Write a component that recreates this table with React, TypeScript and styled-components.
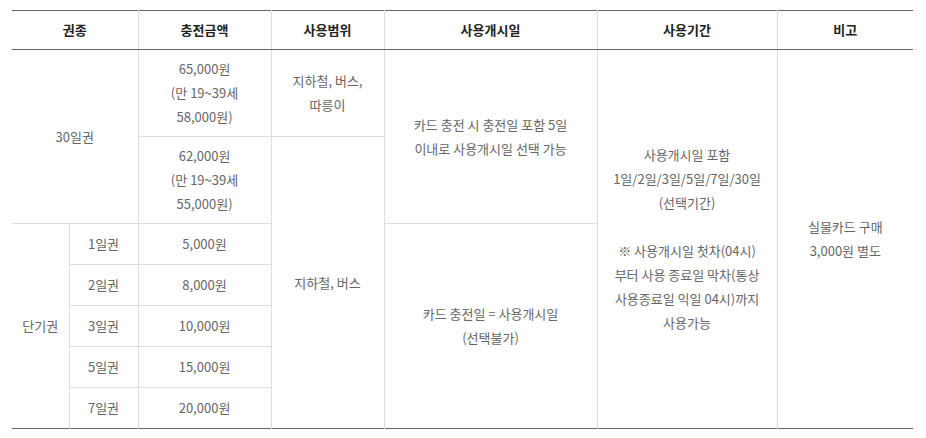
import styled, { createGlobalStyle } from 'styled-components'

const GlobalStyle = createGlobalStyle`
  body {
    margin: 0;
    background: #fff;
    font-family: 'Noto Sans CJK KR', 'Noto Sans', sans-serif;
  }
`

const Wrapper = styled.div`
  padding: 10px 13px 0 12px;
`

const Table = styled.table`
  width: 901px;
  table-layout: fixed;
  border-collapse: collapse;
  border-top: 1px solid #666;
  border-bottom: 1px solid #666;
  font-size: 13px;
  line-height: 24px;
  color: #666;
  text-align: center;
`

const HeadCell = styled.th`
  padding: 7px 6px;
  font-weight: 700;
  color: #222;
  border-left: 1px solid #ddd;
  border-bottom: 1px solid #666;

  &:first-child {
    border-left: none;
  }
`

const Cell = styled.td<{ $tight?: boolean; $first?: boolean }>`
  padding: ${({ $tight }) => ($tight ? '7px 6px' : '8px 6px')};
  vertical-align: middle;
  border-top: 1px solid #ddd;
  border-left: ${({ $first }) => ($first ? 'none' : '1px solid #ddd')};
  border-right: 1px solid #ddd;
  word-break: keep-all;

  &:last-child {
    border-right: none;
  }
`

const widths = [57, 69, 133, 113, 213, 180, 136]

const shortPasses = [
  { name: '2일권', price: '8,000원' },
  { name: '3일권', price: '10,000원' },
  { name: '5일권', price: '15,000원' },
  { name: '7일권', price: '20,000원' },
]

export default function App() {
  return (
    <Wrapper>
      <GlobalStyle />
      <Table>
        <colgroup>
          {widths.map((w, i) => (
            <col key={i} style={{ width: w }} />
          ))}
        </colgroup>
        <thead>
          <tr>
            <HeadCell colSpan={2}>권종</HeadCell>
            <HeadCell>충전금액</HeadCell>
            <HeadCell>사용범위</HeadCell>
            <HeadCell>사용개시일</HeadCell>
            <HeadCell>사용기간</HeadCell>
            <HeadCell>비고</HeadCell>
          </tr>
        </thead>
        <tbody>
          <tr>
            <Cell colSpan={2} rowSpan={2} $first>
              30일권
            </Cell>
            <Cell $tight>
              65,000원
              <br />
              (만 19~39세
              <br />
              58,000원)
            </Cell>
            <Cell $tight>
              지하철, 버스,
              <br />
              따릉이
            </Cell>
            <Cell rowSpan={2}>
              카드 충전 시 충전일 포함 5일
              <br />
              이내로 사용개시일 선택 가능
            </Cell>
            <Cell rowSpan={7}>
              사용개시일 포함
              <br />
              1일/2일/3일/5일/7일/30일
              <br />
              (선택기간)
              <br />
              <br />
              ※ 사용개시일 첫차(04시)
              <br />
              부터 사용 종료일 막차(통상
              <br />
              사용종료일 익일 04시)까지
              <br />
              사용가능
            </Cell>
            <Cell rowSpan={7}>
              실물카드 구매
              <br />
              3,000원 별도
            </Cell>
          </tr>
          <tr>
            <Cell $tight>
              62,000원
              <br />
              (만 19~39세
              <br />
              55,000원)
            </Cell>
            <Cell rowSpan={6}>지하철, 버스</Cell>
          </tr>
          <tr>
            <Cell rowSpan={5} $first>
              단기권
            </Cell>
            <Cell>1일권</Cell>
            <Cell>5,000원</Cell>
            <Cell rowSpan={5}>
              카드 충전일 = 사용개시일
              <br />
              (선택불가)
            </Cell>
          </tr>
          {shortPasses.map((p) => (
            <tr key={p.name}>
              <Cell>{p.name}</Cell>
              <Cell>{p.price}</Cell>
            </tr>
          ))}
        </tbody>
      </Table>
    </Wrapper>
  )
}
